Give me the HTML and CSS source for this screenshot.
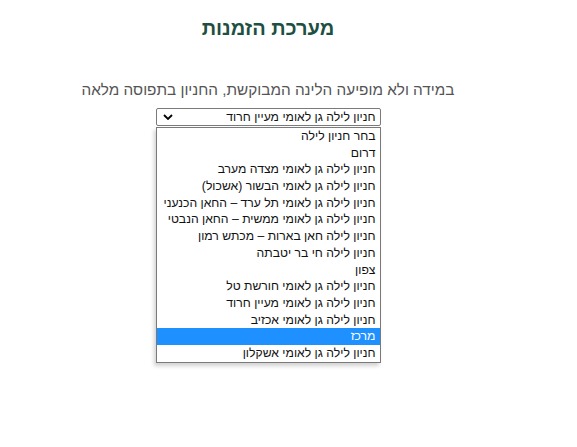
FILE: index.html
```html
<!DOCTYPE html>
<html lang="he" dir="rtl">
<head>
<meta charset="utf-8">
<link rel="stylesheet" href="styles.css">
</head>
<body>
<main class="page">
  <h1 class="title">מערכת הזמנות</h1>
  <p class="notice">במידה ולא מופיעה הלינה המבוקשת, החניון בתפוסה מלאה</p>
  <div class="picker">
    <div class="select">
      <span class="select-value">חניון לילה גן לאומי מעיין חרוד</span>
      <svg class="chev" viewBox="0 0 10 6" width="10" height="6"><path d="M1 1 L5 5 L9 1" fill="none" stroke="#000" stroke-width="1.8"/></svg>
    </div>
    <ul class="list">
      <li>בחר חניון לילה</li>
      <li>דרום</li>
      <li>חניון לילה גן לאומי מצדה מערב</li>
      <li>חניון לילה גן לאומי הבשור (אשכול)</li>
      <li>חניון לילה גן לאומי תל ערד – החאן הכנעני</li>
      <li>חניון לילה גן לאומי ממשית – החאן הנבטי</li>
      <li>חניון לילה חאן בארות – מכתש רמון</li>
      <li>חניון לילה חי בר יטבתה</li>
      <li>צפון</li>
      <li>חניון לילה גן לאומי חורשת טל</li>
      <li>חניון לילה גן לאומי מעיין חרוד</li>
      <li>חניון לילה גן לאומי אכזיב</li>
      <li class="active">מרכז</li>
      <li>חניון לילה גן לאומי אשקלון</li>
    </ul>
  </div>
</main>
</body>
</html>
```
FILE: styles.css
```css
html, body {
  margin: 0;
  padding: 0;
  background: #fff;
}
body {
  font-family: "Liberation Sans", "DejaVu Sans", sans-serif;
  width: 577px;
  height: 447px;
  overflow: hidden;
}
.page {
  width: 536px;
  margin-right: 41px;
  display: flex;
  flex-direction: column;
  align-items: center;
}
.title {
  margin: 15px 0 0;
  font-size: 20px;
  font-weight: bold;
  color: #1d4f43;
  line-height: 26px;
}
.notice {
  margin: 40px 0 0;
  font-size: 15.3px;
  color: #555;
  line-height: 18px;
}
.picker {
  margin-top: 9px;
  width: 225px;
  display: flex;
  flex-direction: column;
}
.select {
  height: 16px;
  border: 1px solid #7a7a7a;
  border-radius: 2px;
  display: flex;
  align-items: center;
  justify-content: space-between;
  padding: 0 4px 0 6px;
  font-size: 12.2px;
  color: #111;
}
.select-value {
  line-height: 16px;
}
.chev {
  display: block;
}
.list {
  list-style: none;
  margin: 1px 0 0;
  padding: 0;
  border: 1px solid #7a7a7a;
  background: #fff;
  box-shadow: -2px 3px 4px rgba(0,0,0,0.18);
}
.list li {
  height: 16.7px;
  line-height: 16.7px;
  font-size: 12.2px;
  color: #111;
  padding: 0 4px;
  white-space: nowrap;
}
.list li.active {
  background: #1e90ff;
  color: #fff;
}
```
